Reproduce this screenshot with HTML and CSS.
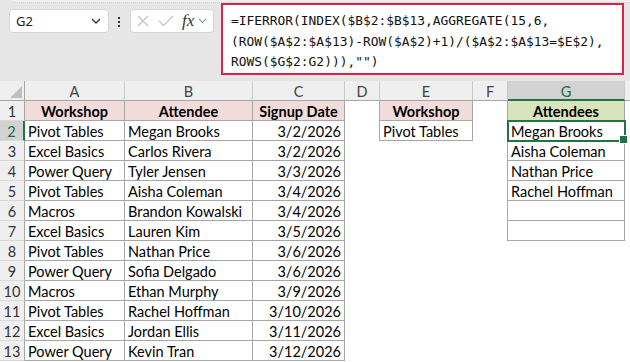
FILE: index.html
```html
<!DOCTYPE html>
<html lang="en">
<head>
    <meta charset="UTF-8">
    <meta name="viewport" content="width=device-width, initial-scale=1.0">
    <title>Workshop Attendees</title>
    <link rel="stylesheet" href="styles.css">
</head>
<body>
    <!-- Name box + formula bar -->
    <div class="toolbar">
        <div class="ribbon-edge"></div>
        <div class="bar">
            <div class="namebox">
                <span>G2</span>
                <svg class="chev" width="10" height="6" viewBox="0 0 10 6"><path d="M1 1l4 4 4-4" fill="none" stroke="#333" stroke-width="1.3"/></svg>
            </div>
            <svg class="grip" width="4" height="12" viewBox="0 0 4 12">
                <rect x="1" y="1" width="2" height="2"/>
                <rect x="1" y="5" width="2" height="2"/>
                <rect x="1" y="9" width="2" height="2"/>
            </svg>
            <div class="fxbox">
                <svg width="12" height="12" viewBox="0 0 12 12"><path d="M1 1l10 10M11 1L1 11" stroke="#c2c2c2" stroke-width="1.2"/></svg>
                <svg width="16" height="12" viewBox="0 0 16 12"><path d="M1 6l4.5 4.5L15 1" fill="none" stroke="#c2c2c2" stroke-width="1.2"/></svg>
                <span class="fx">fx</span>
                <svg class="chev" width="9" height="6" viewBox="0 0 9 6"><path d="M1 1l3.5 3.5L8 1" fill="none" stroke="#999" stroke-width="1.1"/></svg>
            </div>
            <div class="formula">=IFERROR(INDEX($B$2:$B$13,AGGREGATE(15,6,<br>(ROW($A$2:$A$13)-ROW($A$2)+1)/($A$2:$A$13=$E$2),<br>ROWS($G$2:G2))),"")</div>
        </div>
    </div>

    <!-- Worksheet -->
    <div class="sheet">
        <div class="ch corner"><svg width="12" height="12" viewBox="0 0 12 12"><path d="M12 0V12H0z" fill="#bfbfbf"/></svg></div>
        <div class="ch">A</div><div class="ch">B</div><div class="ch">C</div><div class="ch">D</div>
        <div class="ch">E</div><div class="ch">F</div><div class="ch sel">G</div><div class="ch rest"></div>

        <div class="rh">1</div>
        <div class="t hd">Workshop</div><div class="t hd">Attendee</div><div class="t hd">Signup Date</div>
        <div class="c edge"></div><div class="t hd">Workshop</div><div class="c edge"></div><div class="t hd green">Attendees</div><div class="c"></div>

        <div class="rh sel">2</div>
        <div class="t">Pivot Tables</div><div class="t">Megan Brooks</div><div class="t num">3/2/2026</div>
        <div class="c edge"></div><div class="t">Pivot Tables</div><div class="c edge"></div><div class="t active">Megan Brooks</div><div class="c"></div>

        <div class="rh">3</div>
        <div class="t">Excel Basics</div><div class="t">Carlos Rivera</div><div class="t num">3/2/2026</div>
        <div class="c"></div><div class="c"></div><div class="c edge"></div><div class="t">Aisha Coleman</div><div class="c"></div>

        <div class="rh">4</div>
        <div class="t">Power Query</div><div class="t">Tyler Jensen</div><div class="t num">3/3/2026</div>
        <div class="c"></div><div class="c"></div><div class="c edge"></div><div class="t">Nathan Price</div><div class="c"></div>

        <div class="rh">5</div>
        <div class="t">Pivot Tables</div><div class="t">Aisha Coleman</div><div class="t num">3/4/2026</div>
        <div class="c"></div><div class="c"></div><div class="c edge"></div><div class="t">Rachel Hoffman</div><div class="c"></div>

        <div class="rh">6</div>
        <div class="t">Macros</div><div class="t">Brandon Kowalski</div><div class="t num">3/4/2026</div>
        <div class="c"></div><div class="c"></div><div class="c edge"></div><div class="t"></div><div class="c"></div>

        <div class="rh">7</div>
        <div class="t">Excel Basics</div><div class="t">Lauren Kim</div><div class="t num">3/5/2026</div>
        <div class="c"></div><div class="c"></div><div class="c edge"></div><div class="t"></div><div class="c"></div>

        <div class="rh">8</div>
        <div class="t">Pivot Tables</div><div class="t">Nathan Price</div><div class="t num">3/6/2026</div>
        <div class="c"></div><div class="c"></div><div class="c"></div><div class="c"></div><div class="c"></div>

        <div class="rh">9</div>
        <div class="t">Power Query</div><div class="t">Sofia Delgado</div><div class="t num">3/6/2026</div>
        <div class="c"></div><div class="c"></div><div class="c"></div><div class="c"></div><div class="c"></div>

        <div class="rh">10</div>
        <div class="t">Macros</div><div class="t">Ethan Murphy</div><div class="t num">3/9/2026</div>
        <div class="c"></div><div class="c"></div><div class="c"></div><div class="c"></div><div class="c"></div>

        <div class="rh">11</div>
        <div class="t">Pivot Tables</div><div class="t">Rachel Hoffman</div><div class="t num">3/10/2026</div>
        <div class="c"></div><div class="c"></div><div class="c"></div><div class="c"></div><div class="c"></div>

        <div class="rh">12</div>
        <div class="t">Excel Basics</div><div class="t">Jordan Ellis</div><div class="t num">3/11/2026</div>
        <div class="c"></div><div class="c"></div><div class="c"></div><div class="c"></div><div class="c"></div>

        <div class="rh">13</div>
        <div class="t">Power Query</div><div class="t">Kevin Tran</div><div class="t num">3/12/2026</div>
        <div class="c"></div><div class="c"></div><div class="c"></div><div class="c"></div><div class="c"></div>
    </div>
</body>
</html>
```

FILE: styles.css
```css
* {
    box-sizing: border-box;
}
body {
    margin: 0;
    width: 630px;
    height: 362px;
    overflow: hidden;
    background: white;
    font-family: Lato, "Liberation Sans", sans-serif;
}

/* formula bar */
.toolbar {
    height: 81px;
    background: #e6e6e6;
}
.ribbon-edge {
    height: 3px;
    margin-left: 13px;
    background: #eeeeee;
    border-bottom: 1px dotted #cfcfcf;
}
.bar {
    display: flex;
    align-items: flex-start;
}
.namebox {
    display: flex;
    align-items: center;
    justify-content: space-between;
    width: 100px;
    height: 24px;
    margin: 6px 0 0 9px;
    padding: 0 7px 0 6px;
    background: white;
    border: 1px solid #d6d6d6;
    border-radius: 4px;
    font-family: "Noto Sans", sans-serif;
    font-size: 13px;
    color: #222;
}
.grip {
    margin: 13px 0 0 8px;
    fill: #333;
}
.fxbox {
    display: flex;
    align-items: center;
    width: 84px;
    height: 24px;
    margin: 6px 0 0 9px;
    padding: 0 3px 0 6px;
    gap: 9px;
    background: white;
    border: 1px solid #d6d6d6;
    border-radius: 4px;
}
.fxbox .fx {
    font-family: "Liberation Serif", serif;
    font-style: italic;
    font-size: 17px;
    color: #333;
    margin-left: -1px;
    margin-right: -5px;
}
.formula {
    width: 403px;
    height: 72px;
    margin: 0 0 0 7px;
    padding: 6px 0 0 8px;
    background: white;
    border: 2px solid #e31d4e;
    font-family: "DejaVu Sans Mono", "Liberation Mono", monospace;
    font-size: 12.9px;
    line-height: 20.5px;
    color: #111;
    white-space: nowrap;
}

/* worksheet grid */
.sheet {
    display: grid;
    grid-template-columns: 25px 100px 128px 92px 35px 93px 35px 117px 5px;
    grid-auto-rows: 20px;
    font-size: 14.5px;
    line-height: 21px;
    color: #000;
}
.ch {
    background: #efefef;
    border-right: 1px solid #c8c8c8;
    border-bottom: 1px solid #a6a6a6;
    text-align: center;
    color: #444;
}
.ch.corner {
    display: flex;
    align-items: flex-end;
    justify-content: flex-end;
    padding: 0 2px 2px 0;
    border-right-color: #a6a6a6;
}
.ch.rest {
    border-right: none;
}
.ch.sel {
    background: #d2d2d2;
    color: #1b6a3a;
    border-bottom: 2px solid #217346;
}
.rh {
    background: #efefef;
    border-right: 1px solid #a6a6a6;
    border-bottom: 1px solid #d8d8d8;
    text-align: center;
    color: #333;
}
.rh.sel {
    background: #d2d2d2;
    color: #1b6a3a;
    border-right: 2px solid #217346;
}
.c {
    background: white;
}
.edge {
    border-right: 1px solid #a6a6a6;
}
.t {
    padding: 0 3px;
    border-right: 1px solid #a6a6a6;
    border-bottom: 1px solid #a6a6a6;
    white-space: nowrap;
    overflow: hidden;
}
.hd {
    background: #f2dcdb;
    font-weight: bold;
    text-align: center;
}
.hd.green {
    background: #d8e4bc;
}
.num {
    text-align: right;
}
.active {
    position: relative;
    z-index: 2;
    overflow: visible;
    outline: 2px solid #217346;
    outline-offset: -1px;
}
.active::after {
    content: "";
    position: absolute;
    right: -4px;
    bottom: -4px;
    width: 7px;
    height: 7px;
    background: #217346;
    border: 1px solid white;
}
```
